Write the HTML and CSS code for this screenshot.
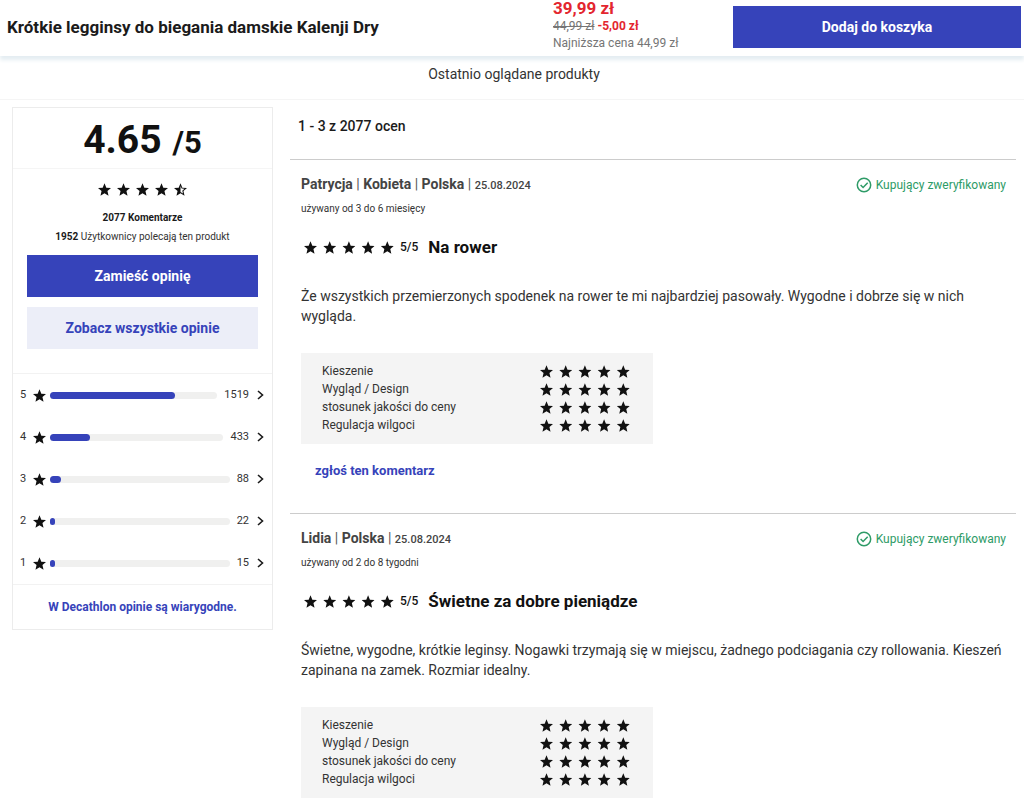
FILE: index.html
```html
<!DOCTYPE html>
<html lang="pl">
<head>
<meta charset="utf-8">
<meta name="viewport" content="width=device-width, initial-scale=1">
<title>Krótkie legginsy do biegania damskie Kalenji Dry</title>
<link rel="stylesheet" href="styles.css">
</head>
<body>
<svg class="sprite" aria-hidden="true">
  <symbol id="star" viewBox="2 2 20 19"><path d="M12 17.27 18.18 21l-1.64-7.03L22 9.24l-7.19-.61L12 2 9.19 8.63 2 9.24l5.46 4.73L5.82 21z"/></symbol>
  <symbol id="star-half" viewBox="2 2 20 19"><path d="M22 9.24l-7.19-.62L12 2 9.19 8.63 2 9.24l5.46 4.73L5.82 21 12 17.27 18.18 21l-1.63-7.03zM12 15.4V6.1l1.71 4.04 4.38.38-3.32 2.88 1 4.28z"/></symbol>
  <symbol id="stars" viewBox="0 0 90 13">
    <use href="#star" x="0" width="13" height="13"/><use href="#star" x="19.2" width="13" height="13"/><use href="#star" x="38.4" width="13" height="13"/><use href="#star" x="57.6" width="13" height="13"/><use href="#star" x="76.8" width="13" height="13"/>
  </symbol>
  <symbol id="chevron" viewBox="0 0 7 10"><path d="M1 1l4.500 4L1 9" fill="none" stroke="#1b1b1b" stroke-width="1.600"/></symbol>
  <symbol id="verified" viewBox="0 0 16 16"><g fill="none" stroke="#2e9b67" stroke-width="1.500"><circle cx="8" cy="8" r="6.700"/><path d="M4.600 8l2.500 2.500 4.600-4.700"/></g></symbol>
</svg>

<header class="buybar">
  <h1 class="buybar-title">Krótkie legginsy do biegania damskie Kalenji Dry</h1>
  <div class="price">
    <strong class="price-now">39,99 zł</strong>
    <div class="price-row"><s>44,99 zł</s> <b class="price-cut">-5,00 zł</b></div>
    <div class="price-row">Najniższa cena 44,99 zł</div>
  </div>
  <button class="btn" type="button">Dodaj do koszyka</button>
</header>

<nav class="recent"><a href="#recent">Ostatnio oglądane produkty</a></nav>

<div class="layout">
  <aside class="summary">
    <div class="score"><span class="score-value">4.65</span><span class="score-max">/5</span></div>
    <div class="totals">
      <div class="score-stars" role="img" aria-label="4.65 / 5">
        <svg class="star"><use href="#star"/></svg><svg class="star"><use href="#star"/></svg><svg class="star"><use href="#star"/></svg><svg class="star"><use href="#star"/></svg><svg class="star"><use href="#star-half"/></svg>
      </div>
      <p class="total"><b>2077 Komentarze</b></p>
      <p class="total"><b>1952</b> Użytkownicy polecają ten produkt</p>
      <div class="actions">
        <button class="btn" type="button">Zamieść opinię</button>
        <button class="btn btn-soft" type="button">Zobacz wszystkie opinie</button>
      </div>
    </div>
    <div class="bars">
      <a class="bar-row" href="#r5"><span class="bar-label">5</span><svg class="star"><use href="#star"/></svg><span class="bar"><span class="bar-fill" style="width:75%"></span></span><span class="bar-count">1519</span><svg class="chevron"><use href="#chevron"/></svg></a>
      <a class="bar-row" href="#r4"><span class="bar-label">4</span><svg class="star"><use href="#star"/></svg><span class="bar"><span class="bar-fill" style="width:23%"></span></span><span class="bar-count">433</span><svg class="chevron"><use href="#chevron"/></svg></a>
      <a class="bar-row" href="#r3"><span class="bar-label">3</span><svg class="star"><use href="#star"/></svg><span class="bar"><span class="bar-fill" style="width:6%"></span></span><span class="bar-count">88</span><svg class="chevron"><use href="#chevron"/></svg></a>
      <a class="bar-row" href="#r2"><span class="bar-label">2</span><svg class="star"><use href="#star"/></svg><span class="bar"><span class="bar-fill" style="width:3%"></span></span><span class="bar-count">22</span><svg class="chevron"><use href="#chevron"/></svg></a>
      <a class="bar-row" href="#r1"><span class="bar-label">1</span><svg class="star"><use href="#star"/></svg><span class="bar"><span class="bar-fill" style="width:3%"></span></span><span class="bar-count">15</span><svg class="chevron"><use href="#chevron"/></svg></a>
    </div>
    <div class="trust"><a href="#trust">W Decathlon opinie są wiarygodne.</a></div>
  </aside>

  <main class="reviews">
    <h2 class="reviews-count">1 - 3 z 2077 ocen</h2>

    <article class="review">
      <div class="review-head">
        <div class="author"><b>Patrycja</b> | <b>Kobieta</b> | <b>Polska</b> | <time>25.08.2024</time></div>
        <div class="verified"><svg><use href="#verified"/></svg>Kupujący zweryfikowany</div>
      </div>
      <p class="usage">używany od 3 do 6 miesięcy</p>
      <div class="headline"><svg class="stars"><use href="#stars"/></svg><span class="mark">5/5</span><h3>Na rower</h3></div>
      <p class="review-text">Że wszystkich przemierzonych spodenek na rower te mi najbardziej pasowały. Wygodne i dobrze się w nich wygląda.</p>
      <table class="aspects">
        <tr><th scope="row">Kieszenie</th><td><svg class="stars" role="img" aria-label="5/5"><use href="#stars"/></svg></td></tr>
        <tr><th scope="row">Wygląd / Design</th><td><svg class="stars" role="img" aria-label="5/5"><use href="#stars"/></svg></td></tr>
        <tr><th scope="row">stosunek jakości do ceny</th><td><svg class="stars" role="img" aria-label="5/5"><use href="#stars"/></svg></td></tr>
        <tr><th scope="row">Regulacja wilgoci</th><td><svg class="stars" role="img" aria-label="5/5"><use href="#stars"/></svg></td></tr>
      </table>
      <a class="report" href="#report">zgłoś ten komentarz</a>
    </article>

    <article class="review">
      <div class="review-head">
        <div class="author"><b>Lidia</b> | <b>Polska</b> | <time>25.08.2024</time></div>
        <div class="verified"><svg><use href="#verified"/></svg>Kupujący zweryfikowany</div>
      </div>
      <p class="usage">używany od 2 do 8 tygodni</p>
      <div class="headline"><svg class="stars"><use href="#stars"/></svg><span class="mark">5/5</span><h3>Świetne za dobre pieniądze</h3></div>
      <p class="review-text">Świetne, wygodne, krótkie leginsy. Nogawki trzymają się w miejscu, żadnego podciagania czy rollowania. Kieszeń zapinana na zamek. Rozmiar idealny.</p>
      <table class="aspects">
        <tr><th scope="row">Kieszenie</th><td><svg class="stars" role="img" aria-label="5/5"><use href="#stars"/></svg></td></tr>
        <tr><th scope="row">Wygląd / Design</th><td><svg class="stars" role="img" aria-label="5/5"><use href="#stars"/></svg></td></tr>
        <tr><th scope="row">stosunek jakości do ceny</th><td><svg class="stars" role="img" aria-label="5/5"><use href="#stars"/></svg></td></tr>
        <tr><th scope="row">Regulacja wilgoci</th><td><svg class="stars" role="img" aria-label="5/5"><use href="#stars"/></svg></td></tr>
      </table>
    </article>
  </main>
</div>
</body>
</html>
```

FILE: styles.css
```css
* { box-sizing: border-box; }
body {
  margin: 0;
  background: #fff;
  color: #333;
  font: 14px/20px Roboto, "Liberation Sans", sans-serif;
}
h1, h2, h3, p { margin: 0; }
a { color: inherit; text-decoration: none; }
svg { display: block; flex: none; }
.sprite { display: none; }
.star { width: 13px; height: 13px; fill: #111; }
.stars { width: 90px; height: 13px; fill: #111; }

.btn {
  height: 42px;
  border: 0;
  padding: 0 12px;
  background: #3643ba;
  color: #fff;
  font: 700 14px/20px Roboto, "Liberation Sans", sans-serif;
  cursor: pointer;
}
.btn-soft { background: #eceef8; color: #3643ba; }

/* Sticky purchase bar */
.buybar {
  position: sticky;
  top: 0;
  z-index: 1;
  display: grid;
  grid-template-columns: minmax(0, 1fr) 180px 288px;
  grid-template-rows: 54px;
  align-items: center;
  padding: 0 3px 2px 7px;
  background: #fff;
  box-shadow: 0 4px 4px #e4edf2;
}
.buybar-title { color: #1b1b1b; font-size: 17px; font-weight: 700; line-height: 24px; }
.price { margin-bottom: 4px; color: #757575; font-size: 12px; line-height: 17px; }
.price-now { display: block; color: #e3262f; font-size: 17px; line-height: 20px; }
.price-cut { color: #e3262f; }

.recent {
  padding: 8px 0 15px 4px;
  border-bottom: 1px solid #f5f5f5;
  text-align: center;
}

.layout {
  display: grid;
  grid-template-columns: 261px minmax(0, 1fr);
  gap: 17px;
  align-items: start;
  padding: 7px 8px 6px 12px;
}

/* Rating summary */
.summary { border: 1px solid #ececec; }
.score {
  display: flex;
  justify-content: center;
  align-items: baseline;
  gap: 11px;
  padding-top: 4px;
  border-bottom: 1px solid #f5f5f5;
  color: #111;
  font-weight: 700;
}
.score-value { font-size: 39px; line-height: 56px; }
.score-max { font-size: 31px; line-height: 40px; }
.totals { padding: 14px 14px 24px; border-bottom: 1px solid #f2f2f2; }
.score-stars { display: flex; justify-content: center; gap: 6px; margin-bottom: 12px; }
.total { font-size: 10px; line-height: 19px; text-align: center; }
.total b { color: #1b1b1b; }
.actions { display: grid; gap: 10px; margin-top: 9px; }
.bar-row {
  display: flex;
  align-items: center;
  height: 42px;
  padding: 0 8px 0 7px;
  font-size: 11px;
}
.bar-label { width: 13px; }
.bar {
  flex: 1;
  height: 7px;
  margin: 0 7px 0 4px;
  border-radius: 4px;
  background: #f0f0ef;
}
.bar-fill { display: block; height: 100%; border-radius: 4px; background: #3643ba; }
.chevron { width: 7px; height: 10px; margin-left: 8px; }
.trust {
  padding: 12px 0;
  border-top: 1px solid #f2f2f2;
  color: #3643ba;
  font-size: 12px;
  font-weight: 700;
  text-align: center;
}

/* Review list */
.reviews-count { padding: 9px 8px 23px; color: #1b1b1b; font-size: 14px; font-weight: 500; line-height: 20px; }
.review { padding: 14px 10px 32px 11px; border-top: 1px solid #ccc; }
.review-head { display: flex; justify-content: space-between; align-items: center; }
.author { color: #555; }
.author b { color: #444; font-weight: 700; }
.author time { color: #444; font-size: 11px; font-weight: 500; }
.verified { display: flex; align-items: center; gap: 4px; color: #2e9b67; font-size: 12px; }
.verified svg { width: 16px; height: 16px; }
.usage { margin-top: 5px; font-size: 10px; line-height: 16px; }
.headline { display: flex; align-items: center; margin-top: 18px; padding-left: 3px; color: #111; }
.mark { margin: 0 10px 0 6px; font-size: 12px; font-weight: 500; }
.headline h3 { font-size: 17px; font-weight: 700; line-height: 24px; }
.review-text { margin: 27px 0; }
.aspects {
  display: block;
  max-width: 352px;
  padding: 9px 21px 10px;
  background: #f4f4f4;
  border-spacing: 0;
  font-size: 12px;
  line-height: 18px;
}
.aspects th { width: 218px; padding: 0; font-weight: 400; text-align: left; }
.aspects td { padding: 0; }
.report { display: inline-block; margin: 17px 0 0 14px; color: #3643ba; font-size: 13px; font-weight: 700; }
```
